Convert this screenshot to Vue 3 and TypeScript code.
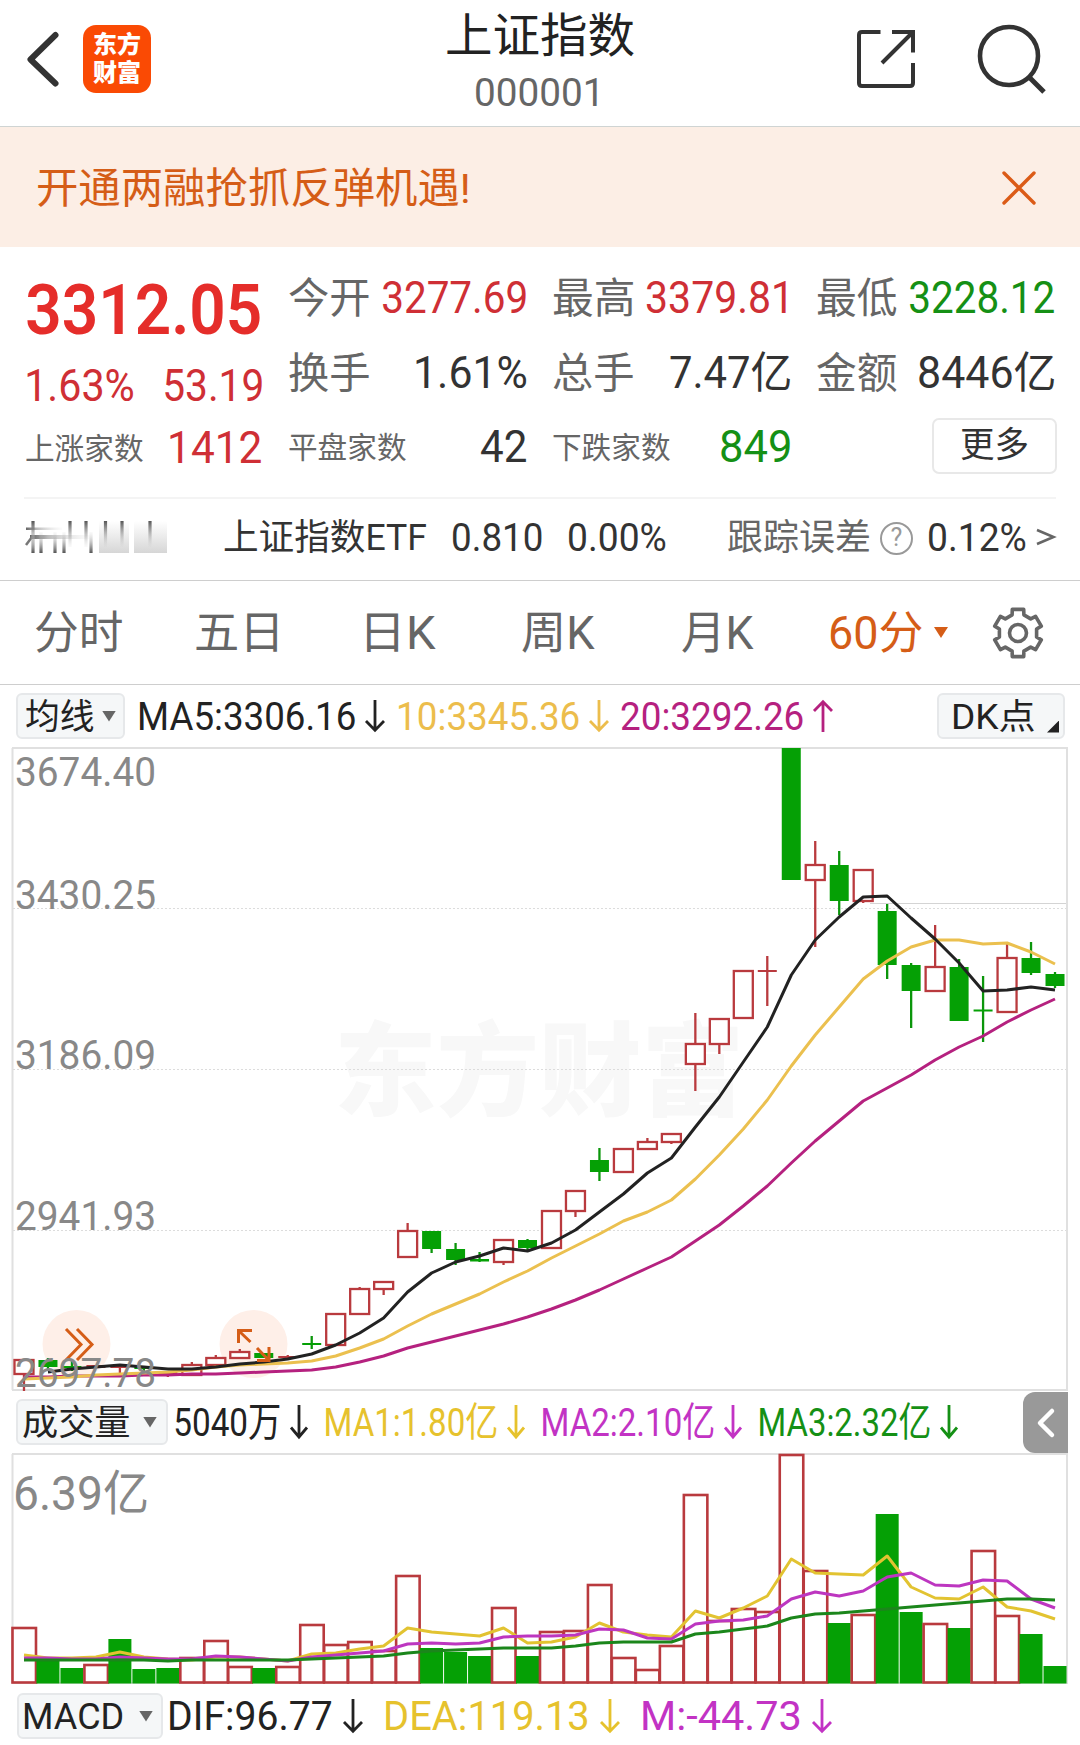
<script setup lang="ts">
import type { Directive } from 'vue'

/* Condenses or widens a run of text so its ink spans exactly the given width. */
const vFit: Directive<HTMLElement, number> = {
  mounted(el, { value }) {
    const cs = getComputedStyle(el)
    const ctx = document.createElement('canvas').getContext('2d')!
    ctx.font = `${cs.fontWeight} ${cs.fontSize} ${cs.fontFamily}`
    const m = ctx.measureText((el.textContent || '').trim())
    const k = value / (m.actualBoundingBoxRight + m.actualBoundingBoxLeft)
    el.style.width = `${value}px`
    el.style.transform = `translateX(${m.actualBoundingBoxLeft * k}px) scaleX(${k})`
  },
}

interface Cell { label: string; lw: number; value?: string; vw?: number; tone?: string; small?: boolean }
const columns: Cell[][] = [
  [
    { label: '今开', lw: 80, value: '3277.69', vw: 143, tone: 'red' },
    { label: '换手', lw: 80, value: '1.61%', vw: 110 },
    { label: '平盘家数', lw: 117, value: '42', vw: 45, small: true },
  ],
  [
    { label: '最高', lw: 80, value: '3379.81', vw: 139, tone: 'red tight' },
    { label: '总手', lw: 80, value: '7.47亿', vw: 120 },
    { label: '下跌家数', lw: 117, value: '849', vw: 69, tone: 'green', small: true },
  ],
  [
    { label: '最低', lw: 80, value: '3228.12', vw: 144, tone: 'green' },
    { label: '金额', lw: 80, value: '8446亿', vw: 135 },
  ],
]

const maItems = [
  { t: 'MA5:3306.16', w: 215, c: '#222', up: false },
  { t: '10:3345.36', w: 180, c: '#ecbd4c', up: false },
  { t: '20:3292.26', w: 182, c: '#b5217f', up: true },
]
const volItems = [
  { t: '5040万', w: 105, c: '#222' },
  { t: 'MA1:1.80亿', w: 171, c: '#e6c22d' },
  { t: 'MA2:2.10亿', w: 171, c: '#c233c4' },
  { t: 'MA3:2.32亿', w: 170, c: '#159015' },
]
const macdItems = [
  { t: 'DIF:96.77', w: 161, c: '#222' },
  { t: 'DEA:119.13', w: 202, c: '#e6c22d' },
  { t: 'M:-44.73', w: 157, c: '#c233c4' },
]

const step = 1055 / 44
const cx = (i: number) => 12 + step * (i + 0.5)

/* [rising, high, body top, body bottom, low] */
const candles: [number, number, number, number, number][] = [
  [1, 1359, 1359, 1375, 1391], [0, 1358, 1360, 1367, 1369], [0, 1361, 1366, 1368, 1371], [1, 1365, 1365, 1368, 1368],
  [1, 1366, 1366, 1368, 1373], [0, 1366, 1367, 1369, 1371], [1, 1372, 1372, 1375, 1377], [1, 1362, 1364, 1376, 1376],
  [1, 1355, 1357, 1366, 1366], [1, 1349, 1351, 1359, 1359], [0, 1353, 1353, 1358, 1358], [1, 1355, 1356, 1358, 1358],
  [0, 1336, 1343, 1345, 1349], [1, 1313, 1313, 1346, 1346], [1, 1287, 1288, 1315, 1315], [1, 1281, 1281, 1290, 1295],
  [1, 1223, 1230, 1258, 1258], [0, 1231, 1231, 1249, 1253], [0, 1243, 1249, 1260, 1265], [0, 1252, 1259, 1261.5, 1262],
  [1, 1239, 1239, 1263, 1265], [0, 1239, 1240, 1248, 1251], [1, 1210, 1210, 1249, 1249], [1, 1190, 1190, 1212, 1217],
  [0, 1148, 1160, 1172, 1181], [1, 1148, 1148, 1173, 1173], [1, 1138, 1141, 1150, 1150], [1, 1133, 1133, 1143, 1144],
  [1, 1013, 1043, 1065, 1091], [1, 1018, 1018, 1045, 1054], [1, 970, 970, 1019, 1019], [1, 956, 970, 972, 1006],
  [0, 748, 748, 880, 880], [1, 841, 864, 881, 947], [0, 851, 865, 901, 915], [1, 869, 869, 902, 903],
  [0, 904, 911, 965, 979], [0, 963, 965, 991, 1028], [1, 925, 966, 992, 992], [0, 959, 967, 1021, 1021],
  [0, 976, 1009.5, 1011.5, 1042], [1, 944, 957, 1013, 1013], [0, 942, 958, 973, 975], [0, 972, 974, 986, 988],
]

/* [rising, bar top] */
const volumes: [number, number][] = [
  [1, 1628], [0, 1659], [0, 1668], [1, 1665], [0, 1639], [0, 1669], [0, 1668], [1, 1658], [1, 1641], [1, 1667], [0, 1668],
  [1, 1667], [1, 1625], [1, 1645], [1, 1642], [1, 1651], [1, 1576], [0, 1648], [0, 1652], [0, 1656], [1, 1608], [0, 1656],
  [1, 1632], [1, 1631], [1, 1585], [1, 1658], [1, 1670], [1, 1646], [1, 1495], [1, 1621], [1, 1609], [1, 1612], [1, 1455],
  [1, 1571], [0, 1623], [1, 1615], [0, 1514], [0, 1612], [1, 1624], [0, 1628], [1, 1551], [1, 1616], [0, 1634], [0, 1666],
]

const line = (ys: number[]) => ys.map((y, i) => `${cx(i + 44 - ys.length).toFixed(1)},${y}`).join(' ')

const ma5 = line([1372, 1369, 1367, 1365, 1367, 1369, 1369, 1367, 1364, 1362, 1359, 1354, 1345, 1333, 1318, 1292, 1273,
  1262, 1256, 1248, 1251, 1243, 1230, 1212, 1194, 1173, 1158, 1127, 1097, 1062, 1027, 975, 940, 917, 897, 896, 918, 939,
  963, 991, 990, 987, 990])
const ma10 = line([1379, 1378, 1377, 1375, 1374, 1373, 1372, 1370, 1367, 1365, 1364, 1363, 1361, 1356, 1348, 1339, 1326,
  1314, 1304, 1294, 1282, 1271, 1258, 1246, 1234, 1221, 1212, 1200, 1179, 1155, 1129, 1100, 1066, 1035, 1007, 979, 961,
  947, 940, 940, 944, 943, 952, 964])
const ma20 = line([1377, 1377, 1376, 1376, 1376, 1375, 1375, 1374, 1374, 1373, 1372, 1371, 1370, 1367, 1362, 1356, 1348,
  1342, 1336, 1330, 1324, 1317, 1309, 1300, 1290, 1279, 1268, 1257, 1241, 1225, 1206, 1186, 1163, 1141, 1121, 1101, 1088,
  1075, 1060, 1047, 1036, 1022, 1010, 999])
const vma1 = line([1655, 1658, 1658, 1657, 1652, 1657, 1659, 1660, 1657, 1657, 1659, 1661, 1654, 1653, 1649, 1646, 1628,
  1632, 1634, 1636, 1628, 1643, 1642, 1637, 1623, 1632, 1635, 1637, 1611, 1618, 1608, 1596, 1559, 1573, 1574, 1575, 1556,
  1587, 1598, 1599, 1587, 1607, 1611, 1619])
const vma2 = line([1658, 1658, 1659, 1659, 1657, 1658, 1659, 1659, 1656, 1657, 1659, 1661, 1657, 1655, 1653, 1651, 1644,
  1643, 1644, 1643, 1637, 1636, 1636, 1635, 1629, 1630, 1638, 1639, 1624, 1621, 1620, 1616, 1599, 1592, 1596, 1591, 1577,
  1573, 1585, 1586, 1580, 1581, 1599, 1608])
const vma3 = line([1660, 1660, 1660, 1660, 1660, 1660, 1661, 1660, 1660, 1660, 1660, 1660, 1659, 1658, 1657, 1656, 1653,
  1651, 1650, 1649, 1648, 1648, 1648, 1646, 1643, 1642, 1642, 1642, 1634, 1632, 1629, 1626, 1618, 1614, 1613, 1611, 1609,
  1607, 1605, 1603, 1601, 1599, 1599, 1600])

const priceLabels = [
  { t: '3674.40', y: 786 }, { t: '3430.25', y: 909 }, { t: '3186.09', y: 1069 }, { t: '2941.93', y: 1230 }, { t: '2697.78', y: 1387 },
]
const smearTop = [33, 70, 86, 105.5, 122, 150]
const smearBottom = [33, 41, 55, 64, 91]

const gear = (() => {
  const p: string[] = []
  for (let i = 0; i < 6; i++) {
    const base = i * 60 - 90
    for (const [r, a] of [[19, -18], [24.3, -13.5], [24.3, 13.5], [19, 18]]) {
      const t = ((base + a) * Math.PI) / 180
      p.push(`${(26 + r * Math.cos(t)).toFixed(1)},${(26 + r * Math.sin(t)).toFixed(1)}`)
    }
  }
  return p.join(' ')
})()
</script>

<template>
  <div class="app">
    <header class="top">
      <svg class="back" width="36" height="60" viewBox="0 0 36 60"><path d="M29.500 6 4.500 30.500 29.500 54.500" fill="none" stroke="#333" stroke-width="6" stroke-linecap="round" stroke-linejoin="round" /></svg>
      <div class="logo">东方<br>财富</div>
      <div class="title">
        <span v-fit="187" class="name">上证指数</span>
        <span v-fit="121" class="code">000001</span>
      </div>
      <svg class="share" width="58" height="58" viewBox="0 0 58 58" fill="none" stroke="#333" stroke-width="4">
        <path d="M23.500 2H5Q2 2 2 5V53Q2 56 5 56H53Q56 56 56 53V33" />
        <path d="M35 2H56V22.500M55 3 25 33" />
      </svg>
      <svg class="search" width="66" height="70" viewBox="0 0 66 70" fill="none" stroke="#333" stroke-width="4.600"><circle cx="32" cy="32" r="29" /><path d="M52 53 67 68" stroke-width="5" /></svg>
    </header>

    <section class="banner">
      <span v-fit="430">开通两融抢抓反弹机遇!</span>
      <svg width="34" height="34" viewBox="0 0 34 34"><path d="M2 2 32 32M32 2 2 32" stroke="#db5b17" stroke-width="3.400" stroke-linecap="round" /></svg>
    </section>

    <section class="quote">
      <div class="lead">
        <div class="big"><span v-fit="233">3312.05</span></div>
        <div class="chg"><span v-fit="106">1.63%</span><span v-fit="97">53.19</span></div>
        <div class="row last"><span v-fit="117" class="lab small">上涨家数</span><span v-fit="91" class="val red">1412</span></div>
      </div>
      <div v-for="(col, c) in columns" :key="c" class="col">
        <div v-for="cell in col" :key="cell.label" class="row">
          <span v-fit="cell.lw" class="lab" :class="{ small: cell.small }">{{ cell.label }}</span>
          <span v-fit="cell.vw" class="val" :class="cell.tone">{{ cell.value }}</span>
        </div>
        <div v-if="c === 2" class="row"><button class="more"><span v-fit="67">更多</span></button></div>
      </div>
    </section>

    <section class="etf">
      <svg class="smear" width="144" height="36" viewBox="24 518 144 36">
        <defs>
          <linearGradient id="st" x1="0" y1="0" x2="0" y2="1"><stop offset="0" stop-color="#555" /><stop offset="1" stop-color="#ccc" stop-opacity="0.100" /></linearGradient>
          <linearGradient id="sb" x1="0" y1="1" x2="0" y2="0"><stop offset="0" stop-color="#555" /><stop offset="1" stop-color="#ccc" stop-opacity="0.100" /></linearGradient>
          <linearGradient id="sg" x1="0" y1="0" x2="0" y2="1"><stop offset="0" stop-color="#fff" /><stop offset="1" stop-color="#d6d6d6" /></linearGradient>
          <linearGradient id="sh" x1="0" y1="0" x2="1" y2="0"><stop offset="0" stop-color="#666" /><stop offset="0.300" stop-color="#bbb" /><stop offset="1" stop-color="#eee" stop-opacity="0.200" /></linearGradient>
        </defs>
        <rect x="99" y="520" width="30" height="32" fill="url(#sg)" /><rect x="134" y="520" width="33" height="32" fill="url(#sg)" />
        <rect x="26" y="526.500" width="36" height="2.500" fill="url(#sh)" /><rect x="30" y="534" width="60" height="4" fill="url(#sh)" />
        <path d="M32 536 26 544" stroke="#777" stroke-width="2.500" />
        <rect v-for="x in smearTop" :key="'t' + x" :x="x - 1.600" y="520" width="3.200" height="26" fill="url(#st)" />
        <rect v-for="x in smearBottom" :key="'b' + x" :x="x - 1.600" y="531" width="3.200" height="21" fill="url(#sb)" />
      </svg>
      <span v-fit="202" class="e1">上证指数ETF</span>
      <span v-fit="89" class="e2">0.810</span>
      <span v-fit="97" class="e3">0.00%</span>
      <span v-fit="141" class="e4">跟踪误差</span>
      <span class="help">?</span>
      <span v-fit="97" class="e5">0.12%</span>
      <svg class="go" width="20" height="20" viewBox="0 0 20 20"><path d="M1 3 17.500 10 1 17" fill="none" stroke="#666" stroke-width="2.600" /></svg>
    </section>

    <nav class="tabs">
      <span v-fit="86" class="t1">分时</span>
      <span v-fit="81" class="t2">五日</span>
      <span v-fit="69" class="t3">日K</span>
      <span v-fit="73" class="t4">周K</span>
      <span v-fit="72" class="t5">月K</span>
      <span v-fit="92" class="t6">60分</span>
      <i class="tri orange"></i>
      <svg class="gear" width="52" height="52" viewBox="0 0 52 52" fill="none" stroke="#666" stroke-width="3.600" stroke-linejoin="round"><polygon :points="gear" /><circle cx="26" cy="26" r="8.500" /></svg>
    </nav>

    <div class="ind ma">
      <button class="pick"><span v-fit="68">均线</span><i class="tri"></i></button>
      <template v-for="m in maItems" :key="m.t">
        <span v-fit="m.w" class="txt" :style="{ color: m.c }">{{ m.t }}</span>
        <svg class="arr" width="20" height="32" viewBox="0 0 20 32" fill="none" :stroke="m.c" stroke-width="2.800"><path :d="m.up ? 'M10 32V1.500M1 11 10 1.800 19 11' : 'M10 0V30.500M1 21 10 30.200 19 21'" /></svg>
      </template>
      <button class="dk"><span v-fit="81">DK点</span><i></i></button>
    </div>

    <svg class="chart" width="1080" height="644" viewBox="0 747 1080 644">
      <text class="mark" x="334" y="1108" textLength="410" lengthAdjust="spacingAndGlyphs">东方财富</text>
      <g stroke="#dcdcdc" stroke-width="1.200" stroke-dasharray="2 2"><path d="M13 908.500H1066M13 1069.500H1066M13 1230.500H1066" /></g>
      <path d="M870 903.500H1066" stroke="#d4d4d4" />
      <path d="M12.500 748V1390M1067 748V1390M12 748H1068M12 1390H1068" stroke="#e0e0e0" stroke-width="2" fill="none" />
      <circle cx="76.500" cy="1344" r="34" fill="#feefe8" /><circle cx="253.500" cy="1344" r="34" fill="#feefe8" />
      <g v-for="(k, i) in candles" :key="i">
        <template v-if="k[0]">
          <path :d="`M${cx(i)} ${k[1]}V${k[2]}M${cx(i)} ${k[3]}V${k[4]}`" stroke="#b93a3e" stroke-width="2.300" />
          <rect v-if="k[3] - k[2] > 4" :x="cx(i) - 9.500" :y="k[2] + 1" width="19" :height="k[3] - k[2] - 2" fill="#fff" stroke="#b93a3e" stroke-width="2.300" />
          <rect v-else :x="cx(i) - 9.500" :y="k[2]" width="19" :height="k[3] - k[2]" fill="#b93a3e" />
        </template>
        <template v-else>
          <path :d="`M${cx(i)} ${k[1]}V${k[4]}`" stroke="#0b960b" stroke-width="2.300" />
          <rect :x="cx(i) - 9.500" :y="k[2]" width="19" :height="k[3] - k[2]" fill="#05a005" />
        </template>
      </g>
      <g fill="none" stroke-width="3" stroke-linejoin="round">
        <polyline :points="ma20" stroke="#b5217f" /><polyline :points="ma10" stroke="#ebc04f" /><polyline :points="ma5" stroke="#222" />
      </g>
      <g fill="none" stroke="#d55d17" stroke-width="3">
        <path d="M66 1329 81 1344.500 66 1360M77 1329 92 1344.500 77 1360" />
        <path d="M252 1330.500H238.500V1343M239 1331 250.500 1342M269 1347V1360.500H257M257 1348 268.500 1360" />
      </g>
      <text v-for="l in priceLabels" :key="l.t" x="15" :y="l.y" class="axis" textLength="141" lengthAdjust="spacingAndGlyphs">{{ l.t }}</text>
    </svg>

    <div class="ind vol">
      <button class="pick"><span v-fit="106">成交量</span><i class="tri"></i></button>
      <template v-for="m in volItems" :key="m.t">
        <span v-fit="m.w" class="txt" :style="{ color: m.c }">{{ m.t }}</span>
        <svg class="arr" width="18" height="34" viewBox="0 0 18 34" fill="none" :stroke="m.c" stroke-width="2.800"><path d="M9 0V32.500M1 22.500 9 32 17 22.500" /></svg>
      </template>
      <div class="fold"><svg width="20" height="32" viewBox="0 0 20 32"><path d="M16 4 4 16 16 28" fill="none" stroke="#fff" stroke-width="4.500" stroke-linecap="round" stroke-linejoin="round" /></svg></div>
    </div>

    <svg class="chart" width="1080" height="231" viewBox="0 1453 1080 231">
      <path d="M12.500 1454V1683M1067 1454V1683M12 1454H1068M12 1683H1068" stroke="#e0e0e0" stroke-width="2" fill="none" />
      <text x="13" y="1510" class="axis vlab" textLength="136" lengthAdjust="spacingAndGlyphs">6.39亿</text>
      <template v-for="(v, i) in volumes" :key="i">
        <rect v-if="v[0]" :x="cx(i) - 11.500" :y="v[1]" width="23.500" :height="1682.500 - v[1]" fill="#fff" stroke="#b93a3e" stroke-width="2.600" />
        <rect v-else :x="cx(i) - 11.500" :y="v[1]" width="23" :height="1683.500 - v[1]" fill="#05a005" />
      </template>
      <g fill="none" stroke-width="3" stroke-linejoin="round">
        <polyline :points="vma1" stroke="#e2c331" /><polyline :points="vma2" stroke="#bd36c0" /><polyline :points="vma3" stroke="#1b861b" />
      </g>
    </svg>

    <div class="ind macd">
      <button class="pick"><span v-fit="98">MACD</span><i class="tri"></i></button>
      <template v-for="m in macdItems" :key="m.t">
        <span v-fit="m.w" class="txt" :style="{ color: m.c }">{{ m.t }}</span>
        <svg class="arr" width="20" height="34" viewBox="0 0 20 34" fill="none" :stroke="m.c" stroke-width="2.800"><path d="M10 0V32.500M1 23 10 32.200 19 23" /></svg>
      </template>
    </div>
  </div>
</template>

<style>
body { margin: 0; background: #fff; }
</style>

<style scoped>
* { box-sizing: border-box; }
.app { width: 1080px; height: 1745px; overflow: hidden; background: #fff; color: #333; font-family: Roboto, "Noto Sans CJK SC", sans-serif; }
.app span { display: block; flex: none; white-space: nowrap; transform-origin: 0 50%; }
.app svg { display: block; flex: none; overflow: visible; }
button { font: inherit; color: inherit; padding: 0; margin: 0; }

.top { height: 127px; display: flex; align-items: flex-start; border-bottom: 1px solid #cfd4d3; }
.back { margin: 29px 0 0 26px; }
.logo { margin: 25px 0 0 21px; width: 68px; height: 68px; border-radius: 13px; background: #fa4a04; color: #fff; font: 900 24px/28px "Noto Sans CJK SC", sans-serif; padding-top: 4px; text-align: center; }
.title { margin-left: 296px; width: 187px; display: flex; flex-direction: column; align-items: flex-start; }
.name { margin-top: 6px; font-size: 47px; line-height: 60px; color: #222; }
.code { margin: 7px 0 0 29px; font-size: 38px; line-height: 40px; color: #666; }
.share { margin: 30px 0 0 223px; }
.search { margin: 24px 0 0 62px; }

.banner { height: 120px; background: #fceee5; display: flex; align-items: center; justify-content: space-between; padding: 1px 44px 0 38px; color: #d55d17; font-size: 41.5px; line-height: 60px; }
.banner span { margin-top: 2px; }

.quote { height: 250px; padding: 20px 0 0 26px; display: flex; gap: 26px; }
.lead { width: 237px; }
.big { height: 84px; display: flex; align-items: center; padding: 2px 0 0 1px; color: #e52d2a; font-size: 71px; font-weight: 600; line-height: 84px; }
.chg { height: 68px; display: flex; justify-content: space-between; align-items: center; padding: 2px 1px 0 1px; color: #cf2f35; font-size: 43.5px; }
.col { width: 238px; }
.row { display: flex; justify-content: space-between; align-items: center; height: 60px; font-size: 43.5px; line-height: 60px; padding-top: 3px; }
.row:nth-child(2) { height: 90px; padding-top: 4px; }
.row:nth-child(3) { padding-top: 2px; }
.row.last { height: 56px; padding-top: 3px; padding-right: 1px; }
.lab { color: #666; font-size: 41.5px; }
.lab.small { font-size: 29.5px; }
.val { margin-right: 1px; }
.val.tight { margin-right: 5px; }
.red { color: #cf2f35; }
.green { color: #159015; }
.more { margin-left: 115px; margin-top: -5px; width: 125px; height: 56px; flex: none; border: 2px solid #e8e8e8; border-radius: 7px; background: #fff; display: flex; justify-content: center; align-items: center; font-size: 35px; line-height: 50px; }

.etf { height: 84px; padding: 0 0 0 24px; display: flex; align-items: center; border-bottom: 1px solid #cecece; font-size: 38px; line-height: 50px; background: linear-gradient(#f4f4f4, #f4f4f4) 24px 0 / 1032px 2px no-repeat; }
.smear { margin-top: -4px; }
.e1 { margin-left: 56px; font-size: 36px; }
.e2 { margin-left: 27px; }
.e3 { margin-left: 27px; }
.e4 { margin-left: 62px; font-size: 36px; color: #666; }
.app .help { margin-left: 11px; width: 33px; height: 33px; border: 2.500px solid #999; border-radius: 50%; color: #999; font-size: 25px; line-height: 28px; text-align: center; }
.e5 { margin-left: 16px; }
.go { margin: -3px 0 0 10px; }
.e1, .e2, .e3, .e4, .e5 { margin-top: -2px; }

.tabs { height: 104px; display: flex; align-items: center; border-bottom: 1px solid #cecece; font-size: 45.5px; line-height: 60px; color: #666; }
.tabs span { margin-top: 2px; }
.t1 { margin-left: 36px; }
.t2 { margin-left: 74px; }
.t3 { margin-left: 90px; }
.t4 { margin-left: 86px; }
.t5 { margin-left: 87px; }
.t6 { margin-left: 76px; color: #d55d17; }
.tri { flex: none; width: 14px; height: 11px; background: #666; clip-path: polygon(0 0, 100% 0, 50% 100%); }
.tri.orange { margin-left: 12px; background: #d55d17; }
.gear { margin-left: 44px; }

.ind { display: flex; align-items: center; height: 62px; padding-left: 16px; line-height: 50px; }
.pick, .dk { flex: none; height: 46px; border: 2px solid #e6e8ea; border-radius: 6px; background: #f5f7f8; display: flex; align-items: center; justify-content: space-between; padding: 0 7px 0 8px; font-size: 35.5px; line-height: 40px; color: #222; }
.pick span, .dk span { margin-top: 1px; }
.ma { font-size: 38px; height: 62px; }
.ma .pick { width: 109px; }
.ma .txt { margin-left: 14px; margin-top: 1px; }
.ma .arr { margin-left: 10px; }
.ma .pick + .txt { margin-left: 15px; }
.ma .arr:nth-of-type(2) + .txt { margin-left: 12px; }
.dk { width: 128px; margin-left: auto; margin-right: 15px; padding: 0 4px 0 14px; }
.dk i { width: 12px; height: 12px; margin-top: 21px; background: #222; clip-path: polygon(100% 0, 100% 100%, 0 100%); }
.vol { font-size: 39.5px; }
.vol .pick { width: 152px; padding: 0 9px 0 5px; }
.vol .txt { margin-left: 18px; margin-top: 2px; }
.vol .arr { margin-left: 10px; }
.vol .pick + .txt, .macd .pick + .txt { margin-left: 7px; }
.fold { align-self: flex-start; margin: 1px 12px 0 auto; width: 45px; height: 61px; background: #999; border-radius: 12px 0 0 12px; display: flex; align-items: center; padding-left: 13px; }
.macd { font-size: 40.5px; height: 61px; padding-left: 17px; padding-top: 3px; }
.macd .pick { width: 146px; padding: 0 8px 0 6px; font-size: 37px; }
.macd .txt { margin-left: 23px; }
.macd .arr { margin-left: 12px; }

.axis { font-size: 40.5px; fill: #888; }
.vlab { font-size: 48px; }
.mark { font-family: "Noto Sans CJK SC", sans-serif; font-weight: 900; font-size: 102px; fill: #f8f8f8; }
</style>
